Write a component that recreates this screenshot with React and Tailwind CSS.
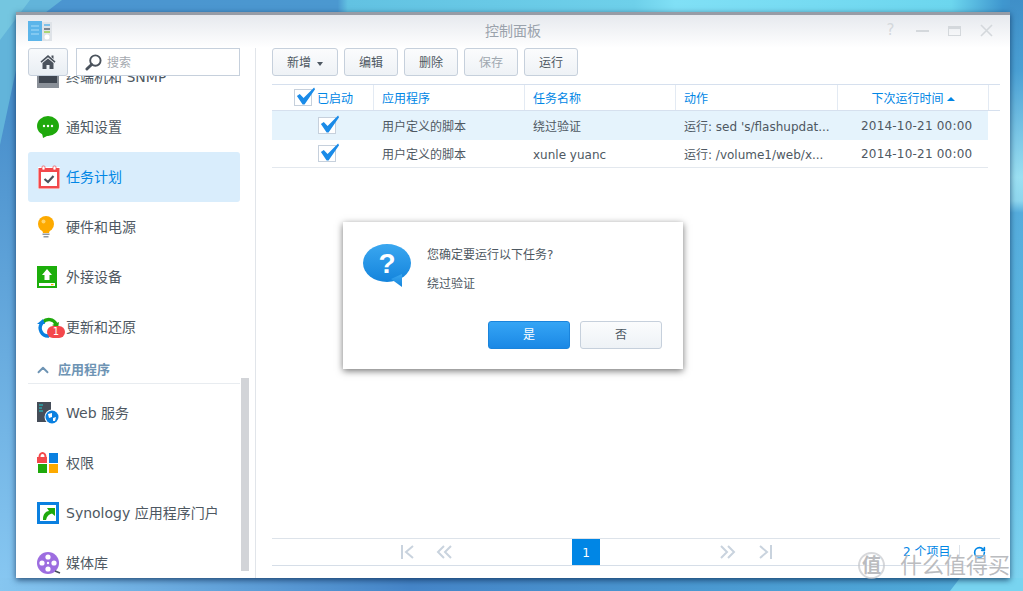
import React from 'react';
import { ChevronUp, RotateCw } from 'lucide-react';

const font = "font-['DejaVu_Sans','Noto_Sans_CJK_SC',sans-serif]";

const Check = () => (
  <span className="relative block border border-[#c6d0dc] bg-white w-[18px] h-[17px]">
    <svg viewBox="0 0 22 20" className="absolute left-0 -top-[4px] w-[21px] h-[20px]">
      <path d="M2 10 L5 8 L9 12 L20 1 L21 3 L10 19 L8 19 Z" fill="#1a8be8" />
    </svg>
  </span>
);

const TerminalIcon = () => (
  <svg viewBox="0 0 22 22" className="w-[22px] h-[22px]">
    <rect x="0" y="0" width="22" height="22" fill="#8a9098" />
    <rect x="2" y="2" width="18" height="15" fill="#3f4650" />
  </svg>
);
const ChatIcon = () => (
  <svg viewBox="0 0 22 22" className="w-[22px] h-[22px]">
    <ellipse cx="11" cy="10" rx="11" ry="10" fill="#1fa90c" />
    <path d="M5 17 L6 22 L12 19 Z" fill="#1fa90c" />
    <circle cx="7" cy="10" r="1.2" fill="#fff" /><circle cx="11" cy="10" r="1.2" fill="#fff" /><circle cx="15" cy="10" r="1.2" fill="#fff" />
  </svg>
);
const CalendarIcon = () => (
  <svg viewBox="0 0 24 24" className="w-[24px] h-[24px]">
    <rect x="1" y="2" width="22" height="22" fill="#fff" />
    <rect x="1.5" y="3" width="21" height="20.5" fill="#f2484b" />
    <rect x="4" y="7" width="16" height="14" fill="#fff" />
    <rect x="5" y="1" width="3" height="4" rx="1" fill="#fff" stroke="#f2484b" strokeWidth="0.7" />
    <rect x="16" y="1" width="3" height="4" rx="1" fill="#fff" stroke="#f2484b" strokeWidth="0.7" />
    <path d="M7.5 14 L11 17 L16.5 11" fill="none" stroke="#4a525c" strokeWidth="2.2" />
  </svg>
);
const BulbIcon = () => (
  <svg viewBox="0 0 18 22" className="w-[18px] h-[22px]">
    <circle cx="9" cy="8" r="8" fill="#fdaa00" />
    <path d="M5 13 H13 L12 17 H6 Z" fill="#fdaa00" />
    <circle cx="6.5" cy="5.5" r="2" fill="#ffd36a" />
    <rect x="5.5" y="17.5" width="7" height="1.5" fill="#8f98a3" />
    <rect x="6.5" y="20" width="5" height="1.5" fill="#8f98a3" />
  </svg>
);
const UploadIcon = () => (
  <svg viewBox="0 0 20 22" className="w-[20px] h-[22px]">
    <rect width="20" height="22" fill="#1cae0b" />
    <path d="M10 3 L15 9 H12.5 V14 H7.5 V9 H5 Z" fill="#fff" />
    <rect x="2" y="17" width="16" height="3" fill="#fff" />
    <rect x="14" y="18" width="2.5" height="1.2" fill="#f6a800" />
  </svg>
);
const UpdateIcon = () => (
  <span className="relative block w-[22px] h-[22px]">
    <svg viewBox="0 0 22 22" className="w-[22px] h-[22px]">
      <path d="M6 6 A8 8 0 0 1 19 8" fill="none" stroke="#1fa90c" strokeWidth="3.4" />
      <path d="M15 9 L22 6 L21 12 Z" fill="#1fa90c" />
      <path d="M5 7 A8 8 0 0 0 12 20" fill="none" stroke="#0a80e0" strokeWidth="3.4" />
      <path d="M0 8 L8 8 L6 3 Z" fill="#0a80e0" />
    </svg>
    <span className="absolute left-[10px] top-[10px] w-[18px] h-[12px] rounded-full bg-[#f4474b] text-white text-[10px] leading-[12px] text-center">1</span>
  </span>
);
const WebIcon = () => (
  <svg viewBox="0 0 22 22" className="w-[22px] h-[22px]">
    <rect x="0" y="0" width="14" height="20" fill="#454d58" />
    <path d="M2 3 H6 M2 6 H5 M2 9 H6" stroke="#1fd0d0" strokeWidth="1" />
    <circle cx="15" cy="15" r="7.5" fill="#fff" />
    <circle cx="15" cy="15" r="6.5" fill="#0a80e0" />
    <path d="M11 12 L15 11 L15 15 L12 16 Z M16 16 L19 15 L18 19 L16 19 Z" fill="#fff" />
  </svg>
);
const PermissionIcon = () => (
  <svg viewBox="0 0 22 22" className="w-[22px] h-[22px]">
    <path d="M2.5 5 A3 4 0 0 1 8.5 5" fill="none" stroke="#f2484b" strokeWidth="2" />
    <rect x="0" y="5" width="10" height="6" fill="#f2484b" />
    <rect x="12" y="1" width="9" height="10" fill="#0a80e0" />
    <rect x="1" y="12" width="9" height="9" fill="#1fa90c" />
    <rect x="12" y="12" width="9" height="9" fill="#fdaa00" />
  </svg>
);
const PortalIcon = () => (
  <svg viewBox="0 0 22 22" className="w-[22px] h-[22px]">
    <rect width="22" height="22" fill="#0a80e0" />
    <rect x="3" y="3" width="16" height="16" fill="#fff" />
    <path d="M6 17 C6 12 9 9 12 9 L10 6 H18 V14 L15 11.5 C12 12 10 14 9 18 H6 Z" fill="#1fa90c" />
  </svg>
);
const MediaIcon = () => (
  <svg viewBox="0 0 24 22" className="w-[24px] h-[22px]">
    <circle cx="11" cy="11" r="11" fill="#9d6de0" />
    <circle cx="11" cy="5" r="2.6" fill="#fff" /><circle cx="11" cy="17" r="2.6" fill="#fff" />
    <circle cx="5" cy="11" r="2.6" fill="#fff" /><circle cx="17" cy="11" r="2.6" fill="#fff" />
    <circle cx="11" cy="11" r="1.2" fill="#fff" />
    <path d="M18 19 L23 21" stroke="#454d58" strokeWidth="1.6" />
  </svg>
);

const NavItem = ({ icon, label, active }) => (
  <div className={`h-[50px] w-[212px] flex items-center rounded-[3px] ${active ? 'bg-[#d9edfc] text-[#0086e5]' : 'text-[#4e5862]'}`}>
    <span className="w-[38px] pl-[9px] flex justify-start">{icon}</span>
    <span className="text-[14px] whitespace-nowrap">{label}</span>
  </div>
);

const ToolButton = ({ width, disabled, children }) => (
  <button className={`${width} h-[28px] pt-[2px] rounded-[3px] border border-[#c6d0dc] bg-gradient-to-b from-[#fbfcfd] to-[#eef2f6] text-[12px] ${disabled ? 'text-[#a0a8b0]' : 'text-[#4e5862]'}`}>
    {children}
  </button>
);

const Pager = ({ flip, double }) => (
  <svg viewBox="0 0 16 14" className={`w-[16px] h-[14px] ${flip ? 'scale-x-[-1]' : ''}`}>
    {double ? (
      <path d="M8 1 L2 7 L8 13 M15 1 L9 7 L15 13" fill="none" stroke="#c9d3de" strokeWidth="2" />
    ) : (
      <path d="M3 0 V14 M14 1 L7 7 L14 13" fill="none" stroke="#c9d3de" strokeWidth="2" />
    )}
  </svg>
);

const Row = ({ name, action, active }) => (
  <div className={`flex items-center text-[12px] text-[#4e5862] w-[716px] ${active ? 'h-[29px] bg-[#e5f3fc]' : 'h-[28px] border-b border-[#e3e8ee]'}`}>
    <span className="w-[102px] pl-[46px]"><Check /></span>
    <span className="w-[151px] pl-[8px] pt-[2px]">用户定义的脚本</span>
    <span className="w-[151px] pl-[8px] pt-[2px]">{name}</span>
    <span className="w-[162px] pl-[8px] pt-[2px] whitespace-nowrap">{action}</span>
    <span className="w-[150px] pl-[23px] whitespace-nowrap tracking-[0.2px]">2014-10-21 00:00</span>
  </div>
);

export default function App() {
  return (
    <div className={`relative w-[1023px] h-[591px] overflow-hidden pl-[16px] pt-[12px] ${font}`}>
      {/* wallpaper */}
      <svg viewBox="0 0 1023 591" className="absolute inset-0 w-full h-full" preserveAspectRatio="none">
        <defs>
          <linearGradient id="left" x1="0" y1="0" x2="0" y2="1">
            <stop offset="0.2" stopColor="#4a90cc" />
            <stop offset="1" stopColor="#88c8f2" />
          </linearGradient>
          <linearGradient id="bottom" x1="0" y1="0" x2="1" y2="0">
            <stop offset="0" stopColor="#86c6f0" />
            <stop offset="0.4" stopColor="#4585c8" />
            <stop offset="0.9" stopColor="#4fa8d8" />
            <stop offset="1" stopColor="#55b0dc" />
          </linearGradient>
          <linearGradient id="top" x1="0" y1="0" x2="1" y2="0">
            <stop offset="0" stopColor="#4b94d0" />
            <stop offset="0.33" stopColor="#4b98d0" />
            <stop offset="0.34" stopColor="#62c2e2" />
            <stop offset="0.62" stopColor="#6ed0ea" />
            <stop offset="0.66" stopColor="#80e0f6" />
            <stop offset="0.93" stopColor="#6cd6ee" />
            <stop offset="0.98" stopColor="#3f97cf" />
            <stop offset="1" stopColor="#3f8fc8" />
          </linearGradient>
          <linearGradient id="right" x1="0" y1="0" x2="0" y2="1">
            <stop offset="0" stopColor="#3f8fc8" />
            <stop offset="0.12" stopColor="#4aa0d4" />
            <stop offset="0.3" stopColor="#9be0f2" />
            <stop offset="0.34" stopColor="#8ed6ee" />
            <stop offset="0.36" stopColor="#55acdc" />
            <stop offset="0.6" stopColor="#5cb8e2" />
            <stop offset="1" stopColor="#80d6f2" />
          </linearGradient>
        </defs>
        <rect width="1023" height="591" fill="url(#left)" />
        <rect width="1023" height="12" fill="url(#top)" />
        <rect x="1010" y="0" width="13" height="591" fill="url(#right)" />
        <rect y="578" width="1023" height="13" fill="url(#bottom)" />
        <polygon points="0,0 62,0 16,35 16,70 0,145" fill="#62b4da" />
        <polygon points="0,0 30,0 0,40" fill="#74c6e0" />
        <polygon points="950,591 960,578 1023,578 1023,591" fill="#78d4f0" />
      </svg>

      <div className="relative w-[994px] h-[566px] bg-white flex flex-col shadow-[0_2px_6px_rgba(10,40,80,0.75)]">
        {/* title bar */}
        <div className="h-[36px] shrink-0 border-t-[3px] border-[#969ca6] bg-gradient-to-b from-[#e6e9ee] to-white flex items-center relative">
          <svg viewBox="0 0 24 21" className="ml-[12px] w-[24px] h-[21px]">
            <rect width="14" height="20" fill="#5cb5ea" />
            <path d="M3 5 H11 M3 9 H11 M3 13 H11" stroke="#a8dcf8" strokeWidth="1" />
            <rect x="14" y="1" width="10" height="19" fill="#dfe3e8" />
            <path d="M16 4 H22" stroke="#5cb5ea" strokeWidth="1.5" />
            <path d="M16 8 H22" stroke="#5c6670" strokeWidth="1.5" />
            <path d="M16 11 H22" stroke="#98d050" strokeWidth="1.5" />
            <circle cx="19" cy="16" r="2.5" fill="#fff" />
          </svg>
          <span className="flex-1 text-center text-[14px] text-[#9aa2ac] -ml-[36px]">控制面板</span>
          <div className="absolute right-[17px] top-[8px] flex items-center gap-[19px] text-[#d4d8dc]">
            <span className="w-[13px] text-[15px] leading-[15px] text-center">?</span>
            <span className="w-[13px] h-[2px] bg-[#d4d8dc]" />
            <span className="w-[13px] h-[10px] border border-t-[3px] border-[#d4d8dc]" />
            <svg viewBox="0 0 13 13" className="w-[13px] h-[13px]"><path d="M1 1 L12 12 M12 1 L1 12" stroke="#d4d8dc" strokeWidth="1.6" /></svg>
          </div>
        </div>

        <div className="flex-1 flex min-h-0">
          {/* left panel */}
          <div className="w-[240px] shrink-0 border-r border-[#e1e5ea] flex flex-col relative">
            <div className="relative z-10 flex gap-[8px] pl-[12px] h-[28px] shrink-0">
              <button className="w-[40px] h-[28px] rounded-[3px] border border-[#c6d0dc] bg-gradient-to-b from-[#f8fafc] to-[#e9eef3] flex items-center justify-center">
                <svg viewBox="0 0 16 16" className="w-[16px] h-[16px]">
                  <path d="M0.5 7.5 L8 1 L15.5 7.5 L14.5 8.8 L8 3.2 L1.5 8.8 Z" fill="#4a525c" />
                  <path d="M11.5 1.5 H13.5 V5 L11.5 3.3 Z" fill="#4a525c" />
                  <path d="M2.5 9 L8 4.4 L13.5 9 V15 H9.5 V11 H6.5 V15 H2.5 Z" fill="#4a525c" />
                </svg>
              </button>
              <div className="w-[164px] h-[28px] border border-[#c6d0dc] bg-white flex items-center pl-[8px]">
                <svg viewBox="0 0 18 18" className="w-[17px] h-[17px]">
                  <circle cx="11" cy="7" r="5.5" fill="none" stroke="#4a525c" strokeWidth="2" />
                  <path d="M7 11 L2 16" stroke="#4a525c" strokeWidth="3" strokeLinecap="round" />
                </svg>
                <span className="ml-[5px] pt-[2px] text-[12px] text-[#a4a9af]">搜索</span>
              </div>
            </div>
            <div className="flex-1 overflow-hidden pl-[12px] relative min-h-0">
              <div className="-mt-[24px]">
                <NavItem icon={<TerminalIcon />} label="终端机和 SNMP" />
                <NavItem icon={<ChatIcon />} label="通知设置" />
                <NavItem icon={<CalendarIcon />} label="任务计划" active />
                <NavItem icon={<BulbIcon />} label="硬件和电源" />
                <NavItem icon={<UploadIcon />} label="外接设备" />
                <NavItem icon={<UpdateIcon />} label="更新和还原" />
                <div className="h-[36px] w-[212px]">
                  <div className="h-[32px] pt-[5px] border-b border-[#e8ecf0] flex items-center pl-[6px] text-[#6e94b4] text-[13px] font-bold">
                    <ChevronUp size={18} strokeWidth={2.5} />
                    <span className="ml-[6px]">应用程序</span>
                  </div>
                </div>
                <NavItem icon={<WebIcon />} label="Web 服务" />
                <NavItem icon={<PermissionIcon />} label="权限" />
                <NavItem icon={<PortalIcon />} label="Synology 应用程序门户" />
                <NavItem icon={<MediaIcon />} label="媒体库" />
              </div>
              <div className="absolute left-[225px] top-[302px] w-[8px] h-[193px] bg-[#d2d4d8]" />
            </div>
          </div>

          {/* right panel */}
          <div className="flex-1 pl-[16px] pr-[10px] flex flex-col min-w-0">
            <div className="flex gap-[6px] h-[28px] shrink-0">
              <ToolButton width="w-[66px]">新增 <span className="inline-block align-middle ml-[2px] border-x-[3px] border-t-[4px] border-x-transparent border-t-[#4e5862]" /></ToolButton>
              <ToolButton width="w-[54px]">编辑</ToolButton>
              <ToolButton width="w-[54px]">删除</ToolButton>
              <ToolButton width="w-[54px]" disabled>保存</ToolButton>
              <ToolButton width="w-[54px]">运行</ToolButton>
            </div>

            <div className="mt-[8px] flex h-[27px] shrink-0 items-center border-y border-[#d6e0ee] text-[12px] text-[#0086e5]">
              <span className="w-[102px] h-full border-r border-[#e3eaf3] flex items-center pl-[22px] gap-[5px]"><Check /><span className="pt-[2px]">已启动</span></span>
              <span className="w-[151px] h-full border-r border-[#e3eaf3] flex items-center pl-[8px] pt-[2px]">应用程序</span>
              <span className="w-[151px] h-full border-r border-[#e3eaf3] flex items-center pl-[8px] pt-[2px]">任务名称</span>
              <span className="w-[162px] h-full border-r border-[#e3eaf3] flex items-center pl-[8px] pt-[2px]">动作</span>
              <span className="w-[151px] h-full border-r border-[#e3eaf3] flex items-center justify-center gap-[3px] pt-[2px]">
                下次运行时间
                <span className="border-x-[4px] border-b-[4px] border-x-transparent border-b-[#0086e5]" />
              </span>
            </div>
            <Row name="绕过验证" action="运行: sed 's/flashupdat..." active />
            <Row name="xunle yuanc" action="运行: /volume1/web/x..." />

            <div className="flex-1" />

            <div className="h-[28px] mb-[12px] shrink-0 border-y border-[#dde3ea] border-b-[#d6dee8] flex items-center relative">
              <span className="ml-[127px]"><Pager /></span>
              <span className="ml-[21px]"><Pager double /></span>
              <span className="ml-[120px] w-[28px] h-[26px] pt-[2px] bg-[#0086e5] text-white text-[12px] flex items-center justify-center">1</span>
              <span className="ml-[120px]"><Pager double flip /></span>
              <span className="ml-[22px]"><Pager flip /></span>
              <span className="ml-[129px] text-[12px] text-[#0086e5] whitespace-nowrap">2 个项目</span>
              <span className="ml-[9px] w-px h-[14px] bg-[#dde3ea]" />
              <RotateCw className="ml-[13px]" size={13} stroke="#0086e5" strokeWidth={3} />
            </div>
          </div>
        </div>

        {/* confirm dialog */}
        <div className="absolute left-[327px] top-[210px] w-[340px] h-[147px] bg-white shadow-[0_2px_7px_rgba(0,0,0,0.55)] p-[20px] pt-[22px]">
          <div className="flex">
            <svg viewBox="0 0 48 44" className="w-[48px] h-[44px] shrink-0">
              <defs>
                <linearGradient id="q" x1="0" y1="0" x2="0" y2="1">
                  <stop offset="0" stopColor="#3aa7f0" />
                  <stop offset="1" stopColor="#1484dc" />
                </linearGradient>
              </defs>
              <ellipse cx="24" cy="19" rx="24" ry="19" fill="url(#q)" />
              <path d="M28 35 L39 43 L39 30 Z" fill="url(#q)" />
              <text x="24" y="29" textAnchor="middle" fill="#fff" fontSize="28" fontWeight="bold" fontFamily="'Liberation Sans', sans-serif">?</text>
            </svg>
            <div className="ml-[16px] text-[12px] text-[#4e5862]">
              <div className="h-[22px] leading-[22px]">您确定要运行以下任务?</div>
              <div className="h-[22px] leading-[22px] mt-[7px]">绕过验证</div>
            </div>
          </div>
          <div className="absolute left-[145px] top-[99px] flex gap-[10px]">
            <button className="w-[82px] h-[28px] rounded-[3px] border border-[#1a84dc] bg-gradient-to-b from-[#35a5f5] to-[#1a88e5] text-white text-[12px]">是</button>
            <button className="w-[82px] h-[28px] rounded-[3px] border border-[#c6d0dc] bg-gradient-to-b from-[#fbfcfd] to-[#eef2f6] text-[#4e5862] text-[12px]">否</button>
          </div>
        </div>
      </div>

      {/* watermark */}
      <div className="absolute left-[858px] top-[552px] flex items-center text-[#a8aaae]/80 [text-shadow:0_0_2px_rgba(255,255,255,0.9)]">
        <span className="w-[27px] h-[27px] rounded-full border-2 border-[#c4c6ca]/70 flex items-center justify-center text-[19px] font-bold">值</span>
        <span className="ml-[15px] text-[22px] leading-[26px] whitespace-nowrap">什么值得买</span>
      </div>
    </div>
  );
}
